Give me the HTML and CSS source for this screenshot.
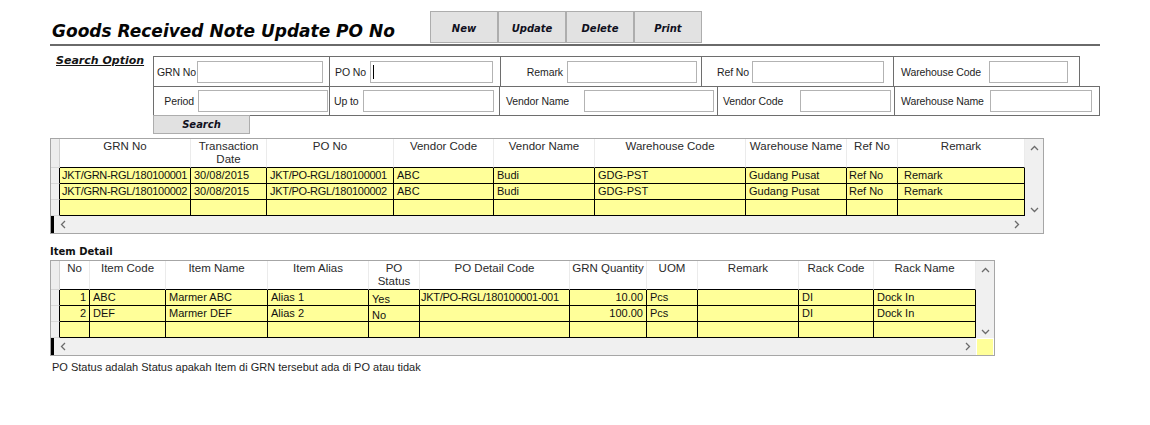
FILE: index.html
```html
<!DOCTYPE html>
<html>
<head>
<meta charset="utf-8">
<title>Goods Received Note Update PO No</title>
<link rel="stylesheet" href="styles.css">
</head>
<body>
<div class="page">
  <header class="top">
    <h1 class="title">Goods Received Note Update PO No</h1>
    <nav class="actions">
      <button class="btn">New</button>
      <button class="btn">Update</button>
      <button class="btn">Delete</button>
      <button class="btn">Print</button>
    </nav>
  </header>
  <div class="rule"></div>

  <section class="search">
    <div class="search-label">Search Option</div>
    <div class="search-body">
      <div class="srow r1">
        <div class="cell c-grn"><span class="lbl">GRN No</span><div class="inp"></div></div>
        <div class="cell c-po"><span class="lbl">PO No</span><div class="inp"><span class="caret"></span></div></div>
        <div class="cell c-rem"><span class="lbl">Remark</span><div class="inp"></div></div>
        <div class="cell c-ref"><span class="lbl">Ref No</span><div class="inp"></div></div>
        <div class="cell c-whc"><span class="lbl">Warehouse Code</span><div class="inp"></div></div>
      </div>
      <div class="srow r2">
        <div class="cell c-per"><span class="lbl">Period</span><div class="inp"></div></div>
        <div class="cell c-upto"><span class="lbl">Up to</span><div class="inp"></div></div>
        <div class="cell c-vn"><span class="lbl">Vendor Name</span><div class="inp"></div></div>
        <div class="cell c-vc"><span class="lbl">Vendor Code</span><div class="inp"></div></div>
        <div class="cell c-whn"><span class="lbl">Warehouse Name</span><div class="inp"></div></div>
      </div>
      <button class="btn-search">Search</button>
    </div>
  </section>

  <div class="grid g1">
    <div class="gmain">
      <div class="row head">
        <div class="sel"></div>
        <div class="h">GRN No</div>
        <div class="h">Transaction<br>Date</div>
        <div class="h">PO No</div>
        <div class="h">Vendor Code</div>
        <div class="h">Vendor Name</div>
        <div class="h">Warehouse Code</div>
        <div class="h">Warehouse Name</div>
        <div class="h">Ref No</div>
        <div class="h">Remark</div>
      </div>
      <div class="row data">
        <div class="sel"></div>
        <div class="d p1 t">JKT/GRN-RGL/180100001</div>
        <div class="d">30/08/2015</div>
        <div class="d t">JKT/PO-RGL/180100001</div>
        <div class="d">ABC</div>
        <div class="d p2">Budi</div>
        <div class="d">GDG-PST</div>
        <div class="d">Gudang Pusat</div>
        <div class="d p1">Ref No</div>
        <div class="d p5">Remark</div>
      </div>
      <div class="row data">
        <div class="sel"></div>
        <div class="d p1 t">JKT/GRN-RGL/180100002</div>
        <div class="d">30/08/2015</div>
        <div class="d t">JKT/PO-RGL/180100002</div>
        <div class="d">ABC</div>
        <div class="d p2">Budi</div>
        <div class="d">GDG-PST</div>
        <div class="d">Gudang Pusat</div>
        <div class="d p1">Ref No</div>
        <div class="d p5">Remark</div>
      </div>
      <div class="row data">
        <div class="sel"></div>
        <div class="d"></div><div class="d"></div><div class="d"></div><div class="d"></div>
        <div class="d"></div><div class="d"></div><div class="d"></div><div class="d"></div><div class="d"></div>
      </div>
    </div>
    <div class="vscroll">
      <svg class="chev" width="9" height="6" viewBox="0 0 9 6"><polyline points="1,5 4.5,1.5 8,5"/></svg>
      <svg class="chev" width="9" height="6" viewBox="0 0 9 6"><polyline points="1,1 4.5,4.5 8,1"/></svg>
    </div>
    <div class="hscroll">
      <svg class="chev" width="6" height="9" viewBox="0 0 6 9"><polyline points="5,1 1.5,4.5 5,8"/></svg>
      <svg class="chev" width="6" height="9" viewBox="0 0 6 9"><polyline points="1,1 4.5,4.5 1,8"/></svg>
    </div>
    <div class="corner"></div>
  </div>

  <div class="sect-title">Item Detail</div>

  <div class="grid g2">
    <div class="gmain">
      <div class="row head">
        <div class="sel"></div>
        <div class="h">No</div>
        <div class="h">Item Code</div>
        <div class="h">Item Name</div>
        <div class="h">Item Alias</div>
        <div class="h">PO<br>Status</div>
        <div class="h">PO Detail Code</div>
        <div class="h">GRN Quantity</div>
        <div class="h">UOM</div>
        <div class="h">Remark</div>
        <div class="h">Rack Code</div>
        <div class="h">Rack Name</div>
      </div>
      <div class="row data">
        <div class="sel"></div>
        <div class="d num">1</div>
        <div class="d p2">ABC</div>
        <div class="d">Marmer ABC</div>
        <div class="d">Alias 1</div>
        <div class="d low">Yes</div>
        <div class="d p0 t">JKT/PO-RGL/180100001-001</div>
        <div class="d num">10.00</div>
        <div class="d">Pcs</div>
        <div class="d"></div>
        <div class="d p2">DI</div>
        <div class="d">Dock In</div>
      </div>
      <div class="row data">
        <div class="sel"></div>
        <div class="d num">2</div>
        <div class="d p2">DEF</div>
        <div class="d">Marmer DEF</div>
        <div class="d">Alias 2</div>
        <div class="d low">No</div>
        <div class="d p0"></div>
        <div class="d num">100.00</div>
        <div class="d">Pcs</div>
        <div class="d"></div>
        <div class="d p2">DI</div>
        <div class="d">Dock In</div>
      </div>
      <div class="row data">
        <div class="sel"></div>
        <div class="d"></div><div class="d"></div><div class="d"></div><div class="d"></div>
        <div class="d"></div><div class="d"></div><div class="d"></div><div class="d"></div>
        <div class="d"></div><div class="d"></div><div class="d"></div>
      </div>
    </div>
    <div class="vscroll">
      <svg class="chev" width="9" height="6" viewBox="0 0 9 6"><polyline points="1,5 4.5,1.5 8,5"/></svg>
      <svg class="chev" width="9" height="6" viewBox="0 0 9 6"><polyline points="1,1 4.5,4.5 8,1"/></svg>
    </div>
    <div class="hscroll">
      <svg class="chev" width="6" height="9" viewBox="0 0 6 9"><polyline points="5,1 1.5,4.5 5,8"/></svg>
      <svg class="chev" width="6" height="9" viewBox="0 0 6 9"><polyline points="1,1 4.5,4.5 1,8"/></svg>
    </div>
    <div class="corner"></div>
  </div>

  <p class="note">PO Status adalah Status apakah Item di GRN tersebut ada di PO atau tidak</p>
</div>
</body>
</html>
```
FILE: styles.css
```css
* { box-sizing: border-box; }

html, body {
  margin: 0;
  padding: 0;
  background: #ffffff;
}

body {
  font-family: "Liberation Sans", Arial, sans-serif;
  font-size: 11px;
  color: #1e1e1e;
}

.page {
  width: 1100px;
  padding-left: 50px;
}

/* ---------- header ---------- */
.top {
  display: flex;
  align-items: flex-start;
  height: 44px;
}

.title {
  width: 380px;
  margin: 21px 0 0 0;
  padding-left: 2px;
  font-family: "DejaVu Sans", sans-serif;
  font-weight: bold;
  font-style: oblique;
  font-size: 17px;
  line-height: 20px;
  color: #050505;
  white-space: nowrap;
}

.actions {
  display: flex;
  margin-top: 11px;
}

.btn {
  width: 68px;
  height: 32px;
  margin: 0;
  padding: 3px 0 0 0;
  background: #e2e2e2;
  border: 1px solid #adadad;
  font-family: "DejaVu Sans", sans-serif;
  font-weight: bold;
  font-style: oblique;
  font-size: 10px;
  color: #101020;
}

.rule {
  width: 1050px;
  height: 2px;
  background: #6a6a6a;
}

/* ---------- search ---------- */
.search {
  display: flex;
  margin-top: 10px;
}

.search-label {
  width: 104px;
  padding-left: 6px;
  margin-top: -2px;
  font-family: "DejaVu Sans", sans-serif;
  font-weight: bold;
  font-style: oblique;
  font-size: 11px;
  line-height: 14px;
  text-decoration: underline;
  color: #151515;
}

.search-body {
  display: flex;
  flex-direction: column;
  align-items: flex-start;
}

.srow {
  display: grid;
  height: 30px;
  border-top: 1px solid #6e6e6e;
}

.srow.r1 {
  grid-template-columns: 176px 171px 201px 192px 187px;
}

.srow.r2 {
  grid-template-columns: 176px 170px 218px 177px 206px;
  border-bottom: 1px solid #6e6e6e;
}

.cell {
  display: flex;
  align-items: center;
  border-left: 1px solid #6e6e6e;
}

.cell:last-child {
  border-right: 1px solid #6e6e6e;
}

.lbl {
  flex: none;
  white-space: nowrap;
  color: #1e1e1e;
  font-size: 10.5px;
  letter-spacing: -0.1px;
}

.inp {
  flex: none;
  height: 22px;
  background: #ffffff;
  border: 1px solid #b3b3b3;
  display: flex;
  align-items: center;
}

.caret {
  display: block;
  width: 1px;
  height: 14px;
  margin-left: 2px;
  background: #000000;
}

.c-grn { padding-left: 3px; }
.c-grn .lbl { width: 40px; }
.c-grn .inp { width: 126px; }

.c-po { padding-left: 5px; }
.c-po .lbl { width: 35px; }
.c-po .inp { width: 123px; }

.c-rem .lbl { width: 66px; text-align: right; padding-right: 4px; }
.c-rem .inp { width: 130px; }

.c-ref { padding-left: 15px; }
.c-ref .lbl { width: 35px; }
.c-ref .inp { width: 132px; }

.c-whc { padding-left: 7px; }
.c-whc .lbl { width: 88px; }
.c-whc .inp { width: 79px; }

.c-per .lbl { width: 44px; text-align: right; padding-right: 4px; }
.c-per .inp { width: 130px; }

.c-upto { padding-left: 4px; }
.c-upto .lbl { width: 29px; }
.c-upto .inp { width: 131px; }

.c-vn { padding-left: 6px; }
.c-vn .lbl { width: 78px; }
.c-vn .inp { width: 130px; }

.c-vc { padding-left: 5px; }
.c-vc .lbl { width: 77px; }
.c-vc .inp { width: 91px; }

.c-whn { padding-left: 6px; }
.c-whn .lbl { width: 89px; }
.c-whn .inp { width: 102px; }

.btn-search {
  width: 97px;
  height: 19px;
  margin: -1px 0 0 0;
  padding: 0;
  background: #e1e1e1;
  border: 1px solid #adadad;
  font-family: "DejaVu Sans", sans-serif;
  font-weight: bold;
  font-style: oblique;
  font-size: 10px;
  color: #101020;
}

/* ---------- grids ---------- */
.grid {
  display: grid;
  grid-template-rows: auto 17px;
  border: 1px solid #a6a6a6;
  background: #ffffff;
}

.g1 {
  margin-top: 4px;
  grid-template-columns: 974px 18px;
  width: 994px;
}

.g2 {
  grid-template-columns: 925px 18px;
  width: 945px;
}

.row {
  display: grid;
}

.g1 .row {
  grid-template-columns: 9px 131px 76px 127px 100px 101px 151px 101px 51px 127px;
}

.g2 .row {
  grid-template-columns: 9px 30px 76px 102px 101px 51px 150px 77px 51px 101px 75px 102px;
}

.row.head {
  height: 29px;
}

.row.data {
  height: 16px;
}

.head .sel {
  background: #ededed;
  border-right: 1px solid #cfcfcf;
  border-bottom: 1px solid #d6d6d6;
}

.data .sel {
  background: #efefef;
  border-right: 1px solid #000000;
  border-bottom: 1px solid #d9d9d9;
}

.h {
  background: #ffffff;
  border-right: 1px solid #ebebeb;
  border-bottom: 1px solid #000000;
  text-align: center;
  font-size: 11.5px;
  line-height: 13px;
  padding-top: 1px;
  color: #2a2a2a;
  white-space: nowrap;
  overflow: hidden;
}

.d {
  background: #ffff99;
  border-right: 1px solid #000000;
  border-bottom: 1px solid #000000;
  font-size: 11px;
  line-height: 15px;
  padding: 0 3px;
  white-space: nowrap;
  overflow: hidden;
  color: #111111;
}

.d.t { letter-spacing: -0.3px; }
.d.p0 { padding-left: 1px; }
.d.p1 { padding-left: 2px; }
.d.p2 { padding-left: 3px; }
.d.p5 { padding-left: 6px; }
.d.num { text-align: right; padding-right: 3px; }
.d.low { line-height: 18px; }

.vscroll {
  background: #f0f0f0;
  display: flex;
  flex-direction: column;
  justify-content: space-between;
  align-items: center;
  padding: 6px 0 3px 1px;
}

.hscroll {
  background: #f0f0f0;
  display: flex;
  justify-content: space-between;
  align-items: center;
  padding: 0 5px 0 9px;
  box-shadow: inset 3px 0 0 #000000;
}

.corner {
  background: #f0f0f0;
}

.g2 .corner {
  background: #ffff99;
  margin: 1px 1px 0 1px;
}

.chev {
  display: block;
  fill: none;
  stroke: #6b6b6b;
  stroke-width: 1.3;
}

.sect-title {
  margin-top: 11px;
  margin-bottom: 2px;
  font-family: "DejaVu Sans", sans-serif;
  font-weight: bold;
  font-size: 10px;
  line-height: 13px;
  color: #111111;
}

.note {
  margin: 5px 0 0 2px;
  font-size: 11px;
  line-height: 13px;
  color: #1e1e1e;
}
```
